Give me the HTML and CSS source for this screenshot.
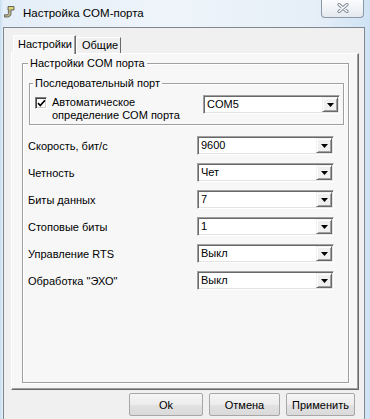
FILE: index.html
```html
<!DOCTYPE html>
<html lang="ru">
<head>
<meta charset="utf-8">
<title>Настройка COM-порта</title>
<link rel="stylesheet" href="styles.css">
</head>
<body>
<div class="titlebar">
  <svg class="app-icon" width="11" height="13" viewBox="0 0 11 13">
    <path d="M4 1.5h6v3.5h-3v3.5c0 2-1.5 3.5-3.5 3.5h-3v-2.2h2.6c0.9 0 1.3-0.5 1.3-1.4v-3.4h-0.4z" fill="#b9b48a" stroke="#5e5d52" stroke-width="0.9"/>
    <path d="M5 2.3h4.2v1.6h-4.2z" fill="#e8dd6a"/>
  </svg>
  <span class="title">Настройка COM-порта</span>
  <div class="close">
    <svg width="12" height="10" viewBox="0 0 12 10">
      <path d="M2 1.5l8 7M10 1.5l-8 7" stroke="#7d8794" stroke-width="3.2" stroke-linecap="round"/>
      <path d="M2 1.5l8 7M10 1.5l-8 7" stroke="#ffffff" stroke-width="1.4" stroke-linecap="round"/>
    </svg>
  </div>
</div>
<div class="client">
  <div class="tabs">
    <div class="tab active">Настройки</div>
    <div class="tab">Общие</div>
  </div>
  <div class="page">
    <fieldset class="group outer">
      <legend>Настройки COM порта</legend>
      <fieldset class="group inner">
        <legend>Последовательный порт</legend>
        <div class="auto-row">
          <label class="check">
            <span class="box"><svg width="9" height="9" viewBox="0 0 9 9"><path d="M1 4.2l2.3 2.3 4.7-5.2" fill="none" stroke="#000" stroke-width="1.7"/></svg></span>
            <span class="check-text">Автоматическое<br>определение COM порта</span>
          </label>
          <div class="combo"><span class="val">COM5</span><span class="arrow"><svg width="7" height="4" viewBox="0 0 7 4"><path d="M0 0h7l-3.5 4z" fill="#000"/></svg></span></div>
        </div>
      </fieldset>
      <div class="rows">
        <div class="row"><span class="lbl">Скорость, бит/с</span><div class="combo"><span class="val">9600</span><span class="arrow"><svg width="7" height="4" viewBox="0 0 7 4"><path d="M0 0h7l-3.5 4z" fill="#000"/></svg></span></div></div>
        <div class="row"><span class="lbl">Четность</span><div class="combo"><span class="val">Чет</span><span class="arrow"><svg width="7" height="4" viewBox="0 0 7 4"><path d="M0 0h7l-3.5 4z" fill="#000"/></svg></span></div></div>
        <div class="row"><span class="lbl">Биты данных</span><div class="combo"><span class="val">7</span><span class="arrow"><svg width="7" height="4" viewBox="0 0 7 4"><path d="M0 0h7l-3.5 4z" fill="#000"/></svg></span></div></div>
        <div class="row"><span class="lbl">Стоповые биты</span><div class="combo"><span class="val">1</span><span class="arrow"><svg width="7" height="4" viewBox="0 0 7 4"><path d="M0 0h7l-3.5 4z" fill="#000"/></svg></span></div></div>
        <div class="row"><span class="lbl">Управление RTS</span><div class="combo"><span class="val">Выкл</span><span class="arrow"><svg width="7" height="4" viewBox="0 0 7 4"><path d="M0 0h7l-3.5 4z" fill="#000"/></svg></span></div></div>
        <div class="row"><span class="lbl">Обработка "ЭХО"</span><div class="combo"><span class="val">Выкл</span><span class="arrow"><svg width="7" height="4" viewBox="0 0 7 4"><path d="M0 0h7l-3.5 4z" fill="#000"/></svg></span></div></div>
      </div>
    </fieldset>
  </div>
  <div class="buttons">
    <button class="btn btn-ok">Ok</button>
    <button class="btn btn-cancel">Отмена</button>
    <button class="btn btn-apply">Применить</button>
  </div>
</div>
</body>
</html>
```

FILE: styles.css
```css
* { box-sizing: border-box; }
html, body { margin: 0; padding: 0; }
body {
  width: 370px;
  height: 419px;
  overflow: hidden;
  background: linear-gradient(90deg, #c9def0 0, #e4eef8 3px, #eef4fa 45%, #e6eff8 85%, #cfe3f4 100%);
  font-family: "Liberation Sans", Arial, sans-serif;
  font-size: 11px;
  color: #000;
}
.titlebar {
  height: 27px;
  display: flex;
  align-items: flex-start;
}
.app-icon { margin: 5px 0 0 4px; flex: none; }
.title {
  font-size: 11.5px;
  line-height: 14px;
  margin: 6px 0 0 8px;
}
.close {
  margin-left: auto;
  margin-right: 6px;
  margin-top: -1px;
  width: 43px;
  height: 19px;
  border: 1px solid #8d98a6;
  border-top: none;
  border-radius: 0 0 4px 4px;
  background: linear-gradient(#fdfdfe, #eef1f5 60%, #e4e9ef);
  display: flex;
  align-items: center;
  justify-content: center;
}
.client {
  margin-left: 3px;
  width: 362px;
  height: 392px;
  border: 1px solid #7f8891;
  border-bottom: none;
  background: #f0f0f0;
  padding: 7px 0 0 7px;
}
.tabs {
  display: flex;
  align-items: flex-end;
  height: 18px;
  margin-left: 2px;
}
.tab {
  height: 16px;
  line-height: 15px;
  padding: 0 5px 0 5px;
  border: 1px solid;
  border-color: #fff #696969 transparent #fff;
  border-bottom: none;
  background: #f0f0f0;
}
.tab.active {
  height: 19px;
  line-height: 17px;
  width: 63px;
  padding: 0 0 0 4px;
  margin-bottom: -1px;
  position: relative;
  z-index: 1;
  background: #f7f7f7;
  box-shadow: inset -1px 0 0 #a0a0a0;
}
.tab:not(.active) { width: 45px; padding-left: 5px; }
.page {
  width: 348px;
  height: 337px;
  border: 1px solid;
  border-color: #fff #696969 #696969 #fff;
  box-shadow: inset -1px -1px 0 #a0a0a0;
  background: #f7f7f7;
  padding: 3px 9px 6px 10px;
  display: flex;
  flex-direction: column;
}
.group {
  margin: 0;
  border: 1px solid #a0a0a0;
  box-shadow: 1px 1px 0 #fff, inset 1px 1px 0 #fff;
  min-width: 0;
}
.group legend {
  padding: 0 2px;
  line-height: 13px;
  background: #f7f7f7;
}
.outer {
  flex: 1;
  padding: 0 14px 0 5px;
}
.inner {
  margin: 7px -10px 0 1px;
  padding: 5px 3px 2px 3px;
}
.auto-row {
  display: flex;
  align-items: flex-start;
}
.check {
  flex: 1;
  display: flex;
  align-items: flex-start;
  margin-left: 2px;
}
.box {
  flex: none;
  width: 12px;
  height: 12px;
  margin-top: 2px;
  border: 1px solid;
  border-color: #808080 #fff #fff #808080;
  box-shadow: inset 1px 1px 0 #404040, inset -1px -1px 0 #d4d0c8;
  background: #fff;
  display: flex;
  align-items: center;
  justify-content: center;
}
.check-text {
  margin-left: 5px;
  line-height: 13px;
  margin-top: 1px;
}
.combo {
  flex: none;
  width: 137px;
  height: 19px;
  border: 1px solid;
  border-color: #a0a0a0 #fff #fff #a0a0a0;
  box-shadow: inset 1px 1px 0 #696969, inset -1px -1px 0 #e3e3e3;
  background: #fff;
  padding: 1px 1px 1px 2px;
  display: flex;
  align-items: stretch;
}
.val {
  flex: 1;
  line-height: 15px;
  padding-left: 1px;
}
.arrow {
  width: 16px;
  border: 1px solid;
  border-color: #f0f0f0 #696969 #696969 #f0f0f0;
  box-shadow: inset 1px 1px 0 #fff, inset -1px -1px 0 #a0a0a0;
  background: #f0f0f0;
  display: flex;
  align-items: center;
  justify-content: center;
}
.rows {
  margin-top: 11px;
  display: flex;
  flex-direction: column;
  gap: 8px;
}
.row {
  display: flex;
  align-items: center;
}
.lbl { flex: 1; }
.buttons {
  display: flex;
  justify-content: flex-end;
  gap: 6px;
  margin-top: 3px;
  padding-right: 9px;
}
.btn {
  height: 23px;
  padding: 0;
  font-family: "Liberation Sans", Arial, sans-serif;
  font-size: 11px;
  color: #000;
  border: 1px solid #a7a7a7;
  border-radius: 2px;
  background: linear-gradient(#f5f5f5, #ececec 50%, #e2e2e2 50%, #dadada);
}
.btn-ok { width: 74px; }
.btn-cancel { width: 71px; }
.btn-apply { width: 69px; }
```
